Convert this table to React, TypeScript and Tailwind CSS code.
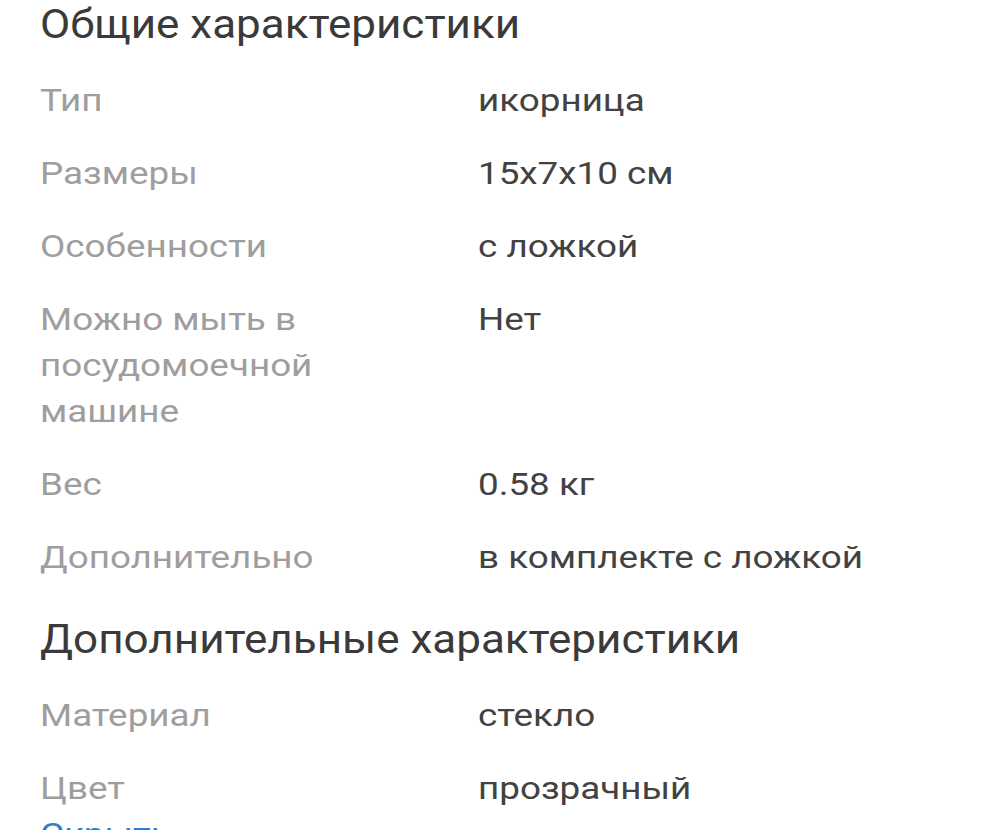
import React from "react";

type Row = { label: string[]; value: string };

const general: Row[] = [
  { label: ["Тип"], value: "икорница" },
  { label: ["Размеры"], value: "15x7x10 см" },
  { label: ["Особенности"], value: "с ложкой" },
  { label: ["Можно мыть в", "посудомоечной", "машине"], value: "Нет" },
  { label: ["Вес"], value: "0.58 кг" },
  { label: ["Дополнительно"], value: "в комплекте с ложкой" },
];

const extra: Row[] = [
  { label: ["Материал"], value: "стекло" },
  { label: ["Цвет"], value: "прозрачный" },
];

function Rows({ rows }: { rows: Row[] }) {
  return (
    <div className="flex flex-col gap-[27px]">
      {rows.map((r, i) => (
        <div key={i} className="flex text-[32px] leading-[46px]">
          <div className="w-[438px] shrink-0 text-[#9e9e9e] origin-left scale-x-[1.15]">
            {r.label.map((l, j) => (
              <div key={j}>{l}</div>
            ))}
          </div>
          <div className="text-[#424242] origin-left scale-x-[1.15]">{r.value}</div>
        </div>
      ))}
    </div>
  );
}

export default function App() {
  return (
    <div
      className="w-[999px] h-[830px] overflow-hidden bg-white pl-[40px]"
      style={{ fontFamily: "Roboto, 'Noto Sans', sans-serif" }}
    >
      <h2 className="text-[40px] leading-[50px] text-[#3a3a3a] mb-[27px] origin-left scale-x-[1.1]">
        Общие характеристики
      </h2>
      <Rows rows={general} />
      <h2 className="text-[40px] leading-[50px] text-[#3a3a3a] mt-[35px] mb-[27px] origin-left scale-x-[1.1]">
        Дополнительные характеристики
      </h2>
      <Rows rows={extra} />
      <div className="text-[32px] leading-[46px] text-[#2b7fd4] origin-left scale-x-[1.15]">Скрыть</div>
    </div>
  );
}
